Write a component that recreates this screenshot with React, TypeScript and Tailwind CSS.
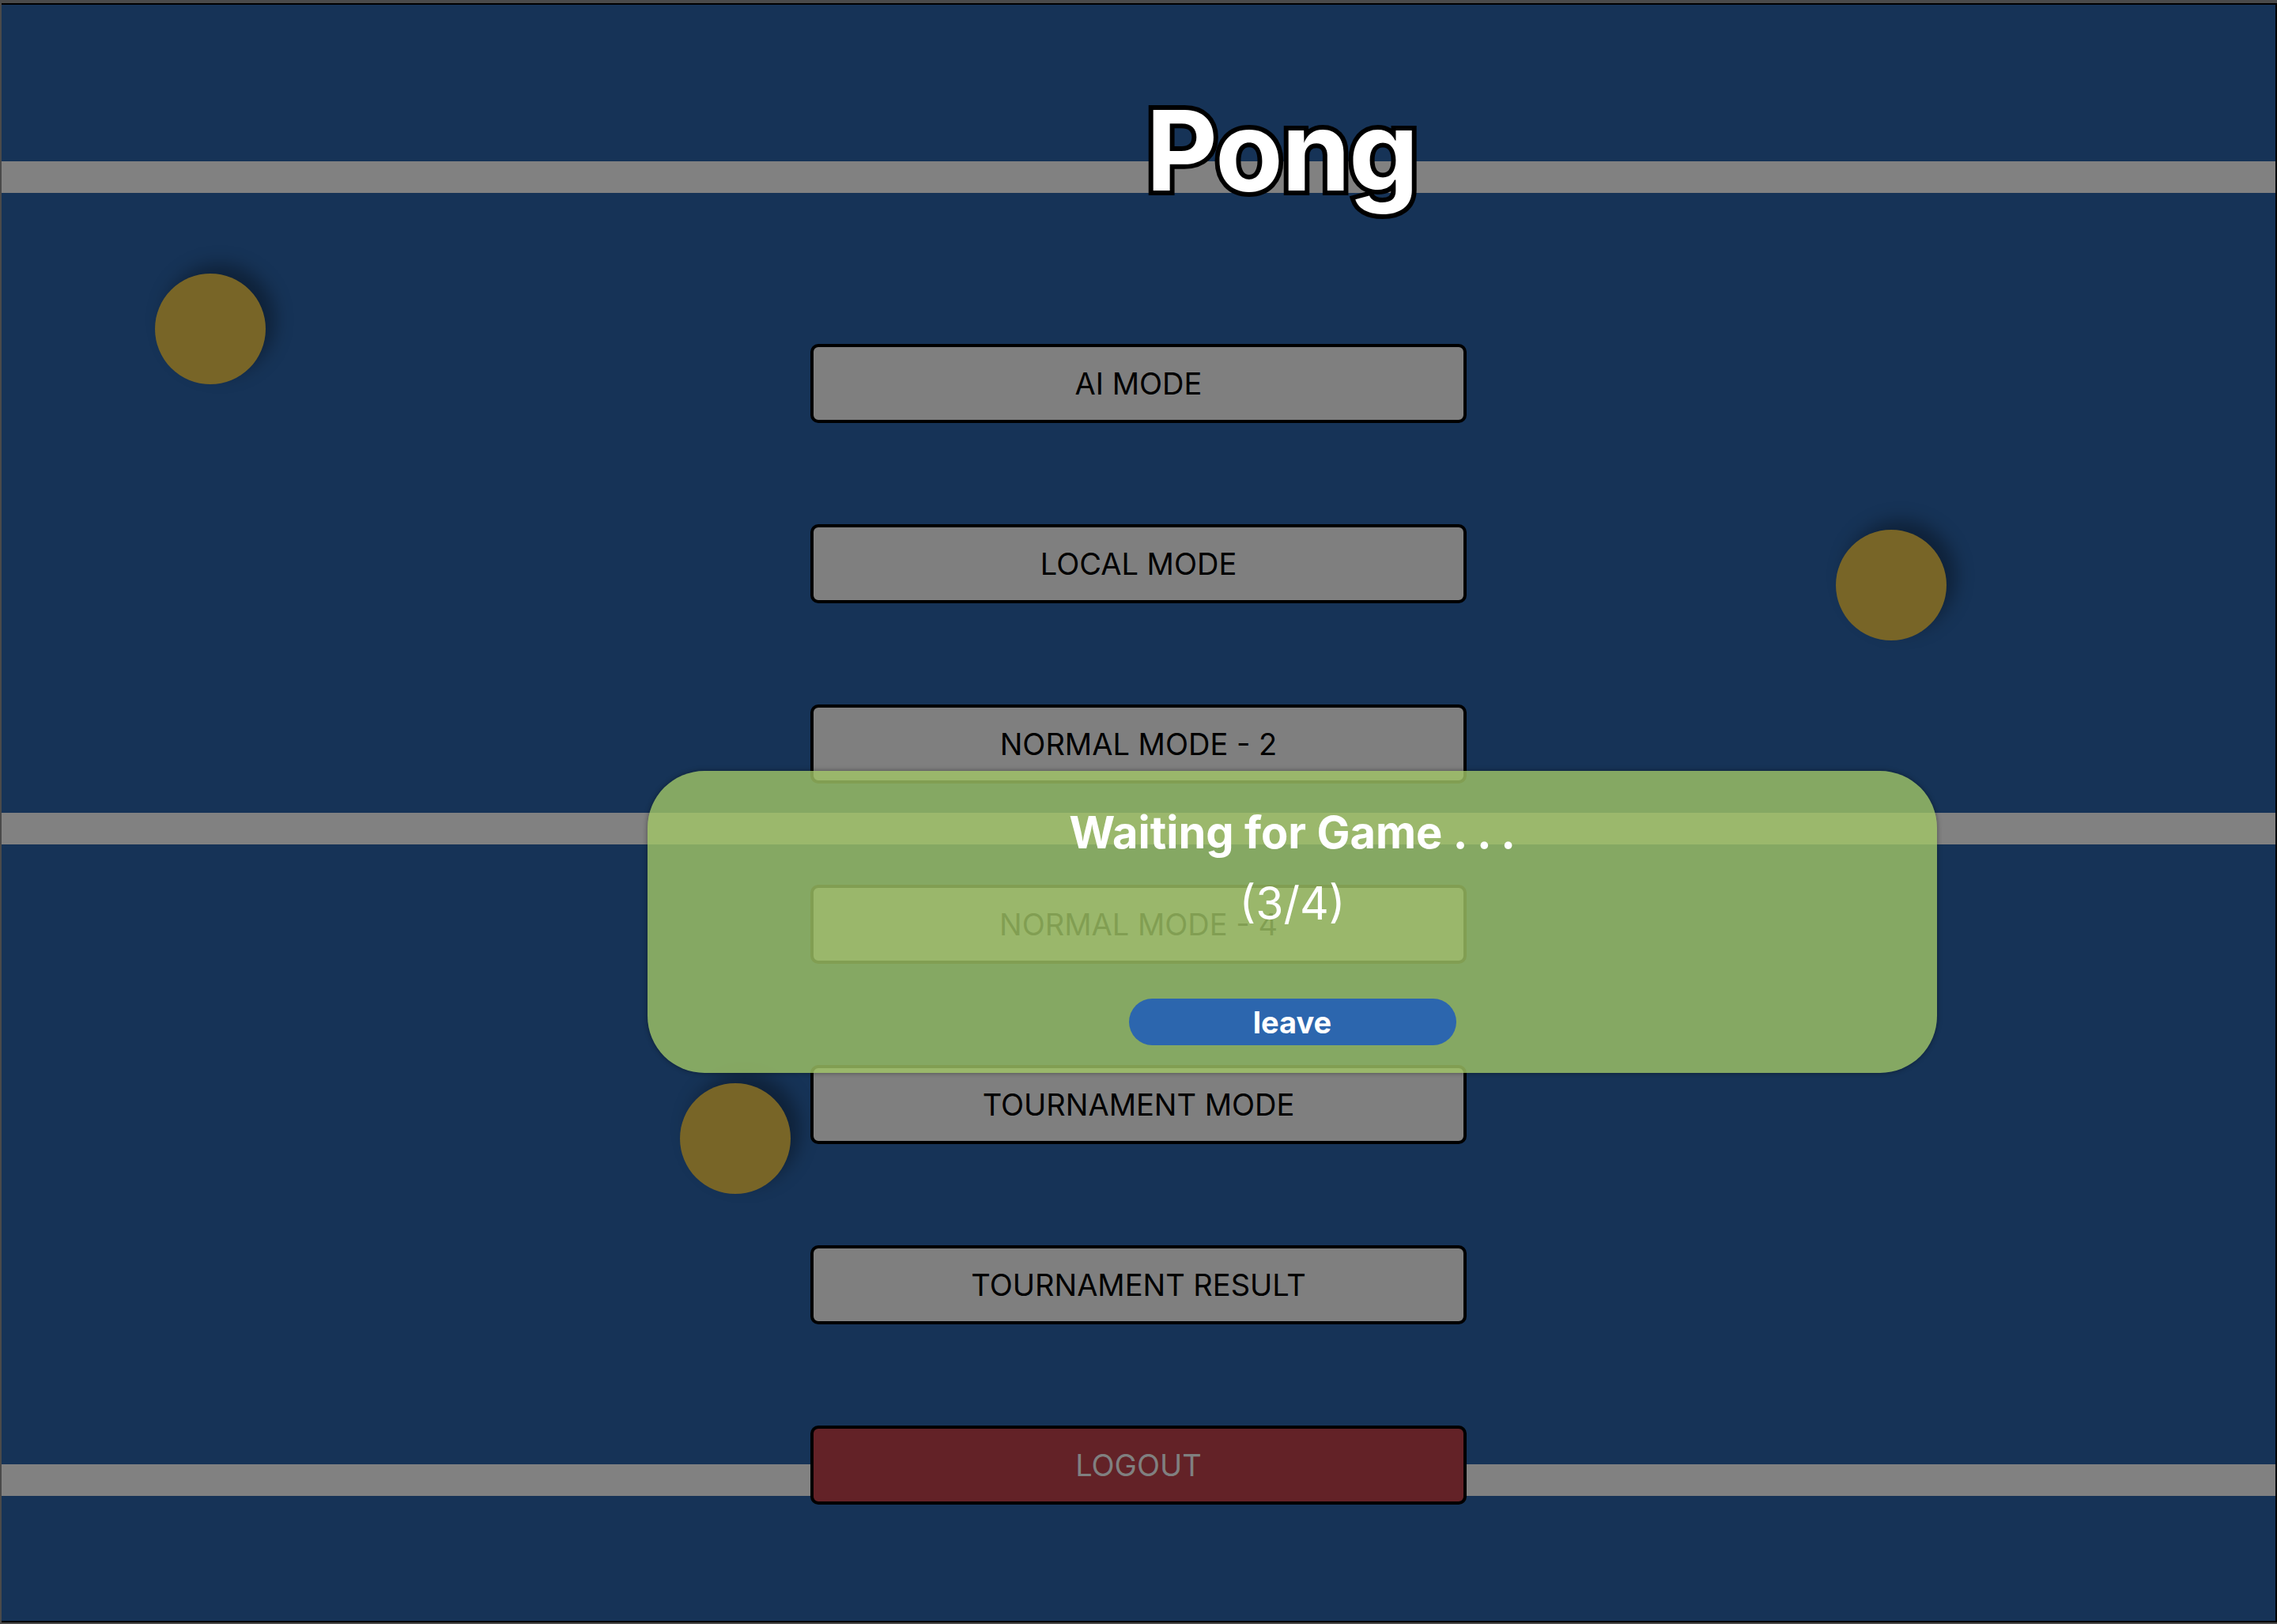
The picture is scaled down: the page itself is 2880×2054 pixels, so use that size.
const modes = ["AI MODE", "LOCAL MODE", "NORMAL MODE - 2", "NORMAL MODE - 4", "TOURNAMENT MODE", "TOURNAMENT RESULT"];

function Ball({ className }: { className: string }) {
  return (
    <div
      className={`absolute w-[140px] h-[140px] rounded-full bg-[#786527] shadow-[12px_-12px_22px_rgba(0,0,0,0.35)] ${className}`}
    />
  );
}

export default function App() {
  return (
    <div className="w-[2880px] h-[2054px] bg-[#4a4a4a] pt-[4px] pl-[2px] font-['Inter',sans-serif] overflow-hidden">
      <div className="relative w-[2878px] h-[2048px] bg-[#163357] border-t-2 border-r-2 border-b-2 border-black overflow-hidden">
        {/* field lines */}
        <div className="absolute left-0 right-0 top-[198px] h-[40px] bg-[#818181]" />
        <div className="absolute left-0 right-0 top-[1022px] h-[40px] bg-[#818181]" />
        <div className="absolute left-0 right-0 top-[1846px] h-[40px] bg-[#818181]" />

        <Ball className="left-[194px] top-[340px]" />
        <Ball className="left-[2320px] top-[664px]" />
        <Ball className="left-[858px] top-[1364px]" />

        <div className="relative flex flex-col items-center">
          <h1 className="w-full pl-[362px] mt-[114px] text-center text-[140px] leading-none font-bold text-white tracking-[-2px] [paint-order:stroke_fill] [-webkit-text-stroke:12px_black]">
            Pong
          </h1>

          <div className="mt-[175px] flex flex-col gap-[128px]">
            {modes.map((m) => (
              <button
                key={m}
                className="w-[830px] h-[100px] border-4 border-black rounded-[10px] bg-[#7f7f7f] text-[38px] text-black"
              >
                {m}
              </button>
            ))}
            <button className="w-[830px] h-[100px] border-4 border-black rounded-[10px] bg-[#632227] text-[38px] text-[#808080]">
              LOGOUT
            </button>
          </div>
        </div>

        {/* waiting modal */}
        <div className="absolute left-[817px] top-[969px] w-[1631px] h-[382px] rounded-[72px] bg-[rgba(161,197,103,0.8)] shadow-[0_0_6px_rgba(0,0,0,0.4)] flex flex-col items-center text-white">
          <div className="mt-[44px] text-[56px] font-bold leading-[68px]">Waiting for Game . . .</div>
          <div className="mt-[22px] text-[57px] leading-[68px]">(3/4)</div>
          <button className="mt-[86px] w-[414px] h-[59px] rounded-full bg-[#2c66ae] text-white text-[38px] font-bold leading-none">
            leave
          </button>
        </div>
      </div>
    </div>
  );
}
